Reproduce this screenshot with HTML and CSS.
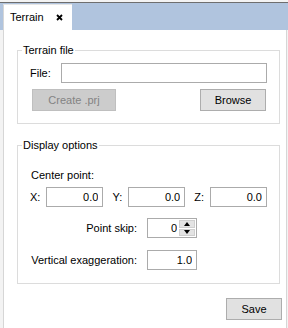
FILE: index.html
```html
<!DOCTYPE html>
<html lang="en">
<head>
    <meta charset="UTF-8" />
    <title>Terrain</title>
    <link rel="stylesheet" href="styles.css">
</head>
<body>
    <div class="window">
        <div class="tabbar">
            <div class="tab">
                <span class="tab-title">Terrain</span>
                <svg class="tab-close" width="7" height="7" viewBox="0 0 7 7">
                    <path d="M1 1 L6 6 M6 1 L1 6" stroke="#000" stroke-width="1.8" />
                </svg>
            </div>
        </div>
        <div class="pane">
            <fieldset class="group group-file">
                <legend>Terrain file</legend>
                <div class="file-row">
                    <label class="file-label">File:</label>
                    <input class="field file-field" type="text">
                </div>
                <div class="btn-row">
                    <button class="btn btn-create" disabled>Create .prj</button>
                    <button class="btn btn-browse">Browse</button>
                </div>
            </fieldset>

            <fieldset class="group group-display">
                <legend>Display options</legend>
                <div class="caption">Center point:</div>
                <div class="xyz-row">
                    <label class="axis">X:</label>
                    <input class="field num" type="text" value="0.0">
                    <label class="axis">Y:</label>
                    <input class="field num" type="text" value="0.0">
                    <label class="axis">Z:</label>
                    <input class="field num" type="text" value="0.0">
                </div>
                <div class="form-row">
                    <label class="form-label">Point skip:</label>
                    <div class="spinbox">
                        <input class="spin-input" type="text" value="0">
                        <div class="spin-btns">
                            <div class="spin-btn"><span class="arrow-up"></span></div>
                            <div class="spin-btn"><span class="arrow-down"></span></div>
                        </div>
                    </div>
                </div>
                <div class="form-row form-row-ve">
                    <label class="form-label">Vertical exaggeration:</label>
                    <input class="field num short" type="text" value="1.0">
                </div>
            </fieldset>

            <div class="footer">
                <button class="btn btn-save">Save</button>
            </div>
        </div>
    </div>
</body>
</html>
```

FILE: styles.css
```css
body {
    margin: 0;
    padding: 0;
    background: #fff;
    font-family: 'Liberation Sans', Arial, sans-serif;
    font-size: 11px;
    line-height: 13px;
    color: #000;
}

.window {
    width: 288px;
    height: 328px;
    display: flex;
    flex-direction: column;
    background: #f3f3f3;
    overflow: hidden;
}

.tabbar {
    margin-top: 2px;
    border-top: 1px solid #6e6e6e;
    background: #b0c4de;
    height: 26px;
    padding: 1px 0 0 3px;
    display: flex;
}

.tab {
    width: 69px;
    background: #fff;
    border-left: 1px solid #d6d6d6;
    border-top: 1px solid #e6e6e6;
    display: flex;
    align-items: center;
    padding: 0 0 0 6px;
    box-sizing: border-box;
    height: 26px;
}

.tab-close {
    margin-left: 12px;
}

.pane {
    flex: 1;
    background: #fff;
    margin: 0 1px 0 3px;
    border-left: 1px solid #d6d6d6;
    border-right: 1px solid #d6d6d6;
    padding: 14px 6px 0 13px;
}

.group {
    margin: 0;
    padding: 0 12px 0 12px;
    border: 1px solid #dcdcdc;
}

.group legend {
    padding: 0 1px;
    margin-left: -8px;
}

.group-file {
    padding-bottom: 12px;
}

.group-display {
    margin-top: 15px;
    padding-bottom: 13px;
}

.field {
    height: 20px;
    box-sizing: border-box;
    border: 1px solid #ababab;
    font: inherit;
    padding: 0 4px;
    margin: 0;
    background: #fff;
    outline: none;
}

.num {
    text-align: right;
    color: #000;
}

.file-row {
    display: flex;
    align-items: center;
    margin-top: 6px;
}

.file-label {
    width: 31px;
}

.file-field {
    flex: 1;
    width: 0;
}

.btn-row {
    display: flex;
    justify-content: space-between;
    margin-top: 6px;
    padding: 0 1px 0 2px;
}

.btn {
    height: 22px;
    font: inherit;
    background: #e1e1e1;
    border: 1px solid #adadad;
    color: #000;
    padding: 0;
    margin: 0;
}

.btn-create {
    width: 84px;
    background: #cccccc;
    border-color: #bfbfbf;
    color: #838383;
}

.btn-browse {
    width: 66px;
}

.caption {
    margin-top: 17px;
    padding-left: 1px;
}

.xyz-row {
    display: flex;
    align-items: center;
    margin-top: 5px;
}

.xyz-row .field {
    flex: 1;
    width: 0;
}

.axis {
    margin: 0 6px 0 9px;
}

.axis:first-child {
    margin-left: 0;
}

.form-row {
    display: flex;
    align-items: center;
    margin-top: 11px;
}

.form-row-ve {
    margin-top: 12px;
}

.form-label {
    width: 107px;
    flex: none;
    text-align: right;
    white-space: nowrap;
    margin-right: 10px;
}

.short {
    width: 50px;
}

.spinbox {
    width: 50px;
    height: 20px;
    box-sizing: border-box;
    border: 1px solid #ababab;
    display: flex;
    background: #fff;
}

.spin-input {
    flex: 1;
    width: 0;
    border: none;
    font: inherit;
    text-align: right;
    padding: 0 2px 0 0;
    margin: 0;
    outline: none;
}

.spin-btns {
    width: 16px;
    display: flex;
    flex-direction: column;
    gap: 1px;
    padding: 1px 1px 1px 0;
}

.spin-btn {
    flex: 1;
    background: #e3e3e3;
    border: 1px solid #cfcfcf;
    display: flex;
    align-items: center;
    justify-content: center;
}

.arrow-up,
.arrow-down {
    width: 0;
    height: 0;
    border-left: 3px solid transparent;
    border-right: 3px solid transparent;
}

.arrow-up {
    border-bottom: 4px solid #000;
}

.arrow-down {
    border-top: 4px solid #000;
}

.footer {
    display: flex;
    justify-content: flex-end;
    margin-top: 14px;
    margin-right: -2px;
}

.btn-save {
    width: 56px;
}
```
